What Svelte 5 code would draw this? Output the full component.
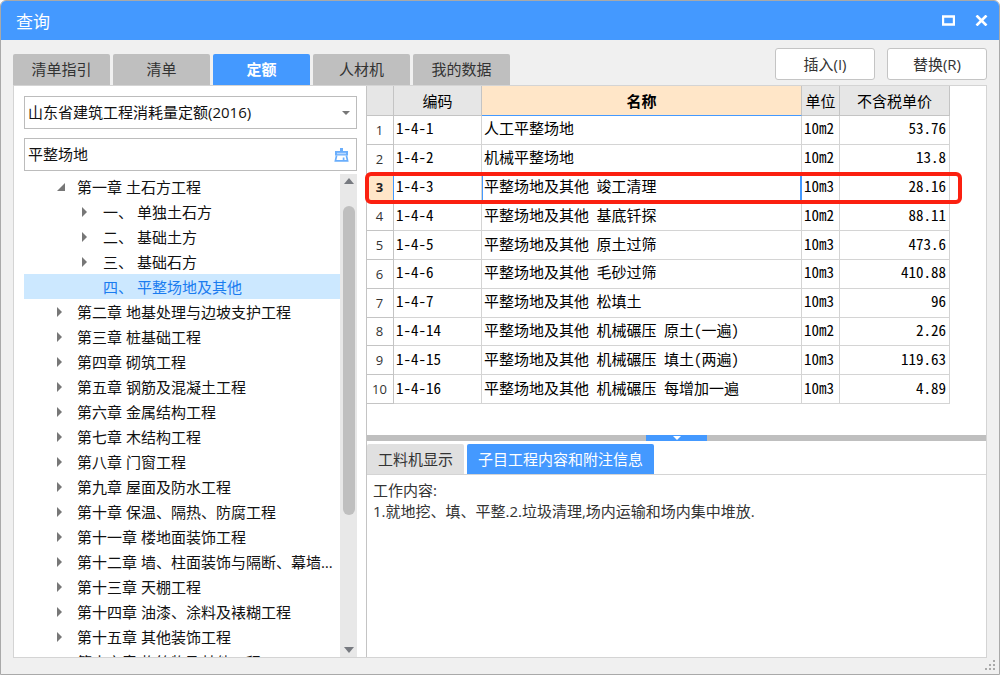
<script lang="ts">
	type TreeNode = { text: string; level: number; state: 'open' | 'closed' | 'leaf' };

	let tabs = ['清单指引', '清单', '定额', '人材机', '我的数据'];
	let activeTab = '定额';

	let detailTabs = ['工料机显示', '子目工程内容和附注信息'];
	let activeDetail = '子目工程内容和附注信息';

	let keyword = '平整场地';

	let activeNode = '四、 平整场地及其他';
	let nodes: TreeNode[] = [
		{ text: '第一章 土石方工程', level: 1, state: 'open' },
		{ text: '一、 单独土石方', level: 2, state: 'closed' },
		{ text: '二、 基础土方', level: 2, state: 'closed' },
		{ text: '三、 基础石方', level: 2, state: 'closed' },
		{ text: '四、 平整场地及其他', level: 2, state: 'leaf' },
		{ text: '第二章 地基处理与边坡支护工程', level: 1, state: 'closed' },
		{ text: '第三章 桩基础工程', level: 1, state: 'closed' },
		{ text: '第四章 砌筑工程', level: 1, state: 'closed' },
		{ text: '第五章 钢筋及混凝土工程', level: 1, state: 'closed' },
		{ text: '第六章 金属结构工程', level: 1, state: 'closed' },
		{ text: '第七章 木结构工程', level: 1, state: 'closed' },
		{ text: '第八章 门窗工程', level: 1, state: 'closed' },
		{ text: '第九章 屋面及防水工程', level: 1, state: 'closed' },
		{ text: '第十章 保温、隔热、防腐工程', level: 1, state: 'closed' },
		{ text: '第十一章 楼地面装饰工程', level: 1, state: 'closed' },
		{ text: '第十二章 墙、柱面装饰与隔断、幕墙工程', level: 1, state: 'closed' },
		{ text: '第十三章 天棚工程', level: 1, state: 'closed' },
		{ text: '第十四章 油漆、涂料及裱糊工程', level: 1, state: 'closed' },
		{ text: '第十五章 其他装饰工程', level: 1, state: 'closed' },
		{ text: '第十六章 构筑物及其他工程', level: 1, state: 'closed' }
	];

	let selected = 2;
	let rows = [
		{ code: '1-4-1', name: '人工平整场地', unit: '10m2', price: '53.76' },
		{ code: '1-4-2', name: '机械平整场地', unit: '10m2', price: '13.8' },
		{ code: '1-4-3', name: '平整场地及其他 竣工清理', unit: '10m3', price: '28.16' },
		{ code: '1-4-4', name: '平整场地及其他 基底钎探', unit: '10m2', price: '88.11' },
		{ code: '1-4-5', name: '平整场地及其他 原土过筛', unit: '10m3', price: '473.6' },
		{ code: '1-4-6', name: '平整场地及其他 毛砂过筛', unit: '10m3', price: '410.88' },
		{ code: '1-4-7', name: '平整场地及其他 松填土', unit: '10m3', price: '96' },
		{ code: '1-4-14', name: '平整场地及其他 机械碾压 原土(一遍)', unit: '10m2', price: '2.26' },
		{ code: '1-4-15', name: '平整场地及其他 机械碾压 填土(两遍)', unit: '10m3', price: '119.63' },
		{ code: '1-4-16', name: '平整场地及其他 机械碾压 每增加一遍', unit: '10m3', price: '4.89' }
	];
</script>

<div class="window">
	<header class="titlebar">
		<h1>查询</h1>
		<button class="win-btn" aria-label="最大化">
			<svg width="13" height="11" viewBox="0 0 13 11">
				<path d="M1 1.5h11v8H1z" fill="none" stroke="#fff" stroke-width="2.4" />
			</svg>
		</button>
		<button class="win-btn" aria-label="关闭">
			<svg width="13" height="11" viewBox="0 0 13 11">
				<path d="M1.5.5l10 10M11.5.5l-10 10" fill="none" stroke="#fff" stroke-width="2.6" />
			</svg>
		</button>
	</header>

	<div class="toolbar">
		<nav class="tabs">
			{#each tabs as tab}
				<button class="tab" class:active={tab === activeTab} on:click={() => (activeTab = tab)}>
					{tab}
				</button>
			{/each}
		</nav>
		<div class="actions">
			<button class="action">插入(I)</button>
			<button class="action">替换(R)</button>
		</div>
	</div>

	<main class="content">
		<aside class="side">
			<div class="field">
				<select aria-label="定额库">
					<option>山东省建筑工程消耗量定额(2016)</option>
				</select>
				<svg class="caret" width="8" height="4" viewBox="0 0 8 4">
					<path d="M0 0h8L4 4z" fill="#777" />
				</svg>
			</div>
			<div class="field">
				<input type="text" aria-label="搜索" bind:value={keyword} />
				<button class="clear" aria-label="清空" on:click={() => (keyword = '')}>
					<svg width="15" height="16" viewBox="0 0 15 16">
						<path d="M6 1h3v3h5v4.5H1V4h5z" fill="#6aaefc" />
						<path d="M3 6.5h9" stroke="#b7d8ff" stroke-width="1.4" />
						<path
							d="M2.6 8.5L1.4 13.8h12.2L12.4 8.5M9.6 10.5v3"
							fill="none"
							stroke="#6aaefc"
							stroke-width="1.7"
						/>
					</svg>
				</button>
			</div>

			<div class="tree-box">
				<ul class="tree">
					{#each nodes as node}
						<li class={'level' + node.level} class:current={node.text === activeNode}>
							<span class="twisty">
								{#if node.state === 'open'}
									<svg width="8" height="8" viewBox="0 0 8 8"><path d="M8 0v8H0z" fill="#777" /></svg>
								{:else if node.state === 'closed'}
									<svg width="8" height="10" viewBox="0 0 8 10"><path d="M0 0l5 5-5 5z" fill="#777" /></svg>
								{/if}
							</span>
							<button class="node" on:click={() => (activeNode = node.text)}>{node.text}</button>
						</li>
					{/each}
				</ul>
				<div class="scrollbar">
					<svg width="10" height="6" viewBox="0 0 10 6"><path d="M0 6h10L5 0z" fill="#777a80" /></svg>
					<div class="track"><div class="thumb"></div></div>
					<svg width="10" height="6" viewBox="0 0 10 6"><path d="M0 0h10L5 6z" fill="#777a80" /></svg>
				</div>
			</div>
		</aside>

		<section class="main">
			<div class="grid-box">
				<table>
					<colgroup>
						<col class="c-num" />
						<col class="c-code" />
						<col />
						<col class="c-unit" />
						<col class="c-price" />
					</colgroup>
					<thead>
						<tr>
							<th></th>
							<th>编码</th>
							<th class="sorted">名称</th>
							<th>单位</th>
							<th>不含税单价</th>
						</tr>
					</thead>
					<tbody>
						{#each rows as row, i}
							<tr class:selected={i === selected} on:click={() => (selected = i)}>
								<td class="num">{i + 1}</td>
								<td>{row.code}</td>
								<td class="name">{row.name}</td>
								<td>{row.unit}</td>
								<td class="price">{row.price}</td>
							</tr>
						{/each}
					</tbody>
				</table>
			</div>

			<div class="splitter">
				<button class="handle" aria-label="收起">
					<svg width="8" height="4" viewBox="0 0 8 4"><path d="M0 0h8L4 4z" fill="#fff" /></svg>
				</button>
			</div>

			<nav class="detail-tabs">
				{#each detailTabs as tab}
					<button
						class="detail-tab"
						class:active={tab === activeDetail}
						on:click={() => (activeDetail = tab)}
					>
						{tab}
					</button>
				{/each}
			</nav>
			<div class="detail">
				<p>工作内容:</p>
				<p>1.就地挖、填、平整.2.垃圾清理,场内运输和场内集中堆放.</p>
			</div>
		</section>
	</main>

	<footer>
		<svg width="11" height="11" viewBox="0 0 11 11" fill="#aaa">
			<path d="M8 0h2v2H8zM4 4h2v2H4zM8 4h2v2H8zM0 8h2v2H0zM4 8h2v2H4zM8 8h2v2H8z" />
		</svg>
	</footer>
</div>

<style>
	:global(body) {
		margin: 0;
		background: #fff;
	}

	* {
		box-sizing: border-box;
	}

	.window {
		display: flex;
		flex-direction: column;
		height: 100vh;
		border: 1px solid #a9a9a9;
		border-radius: 6px 6px 0 0;
		overflow: hidden;
		background: #f0f0f0;
		color: #111;
		font-family: 'Open Sans', 'Noto Sans CJK SC', sans-serif;
		font-size: 15px;
		line-height: 20px;
	}

	button,
	input,
	select {
		margin: 0;
		padding: 0;
		border: none;
		background: none;
		color: inherit;
		font: inherit;
	}

	svg {
		display: block;
	}

	.titlebar {
		display: flex;
		align-items: center;
		gap: 20px;
		height: 39px;
		flex: none;
		padding: 0 11px 0 15px;
		background: #4499ff;
		color: #fff;
	}

	h1 {
		flex: 1;
		margin: 0;
		padding-top: 3px;
		font-size: 17px;
		font-weight: 400;
	}

	.toolbar {
		display: flex;
		justify-content: space-between;
		align-items: flex-end;
		flex: none;
		height: 45px;
		padding: 0 12px;
	}

	.tabs {
		display: flex;
		gap: 3px;
	}

	.tab {
		width: 97px;
		height: 31px;
		padding-bottom: 2px;
		border-radius: 2px 2px 0 0;
		background: #bfbfbf;
		color: #333;
	}

	.tab.active {
		background: #4499ff;
		color: #fff;
		font-weight: 700;
	}

	.actions {
		display: flex;
		gap: 12px;
		padding-bottom: 5px;
	}

	.action {
		width: 100px;
		height: 32px;
		border: 1px solid #c4c4c4;
		border-radius: 3px;
		background: #fff;
		color: #333;
	}

	.content {
		display: flex;
		flex: 1;
		min-height: 0;
		margin: 0 12px;
		border: 1px solid #d4d4d4;
		background: #fff;
	}

	.side {
		display: flex;
		flex-direction: column;
		gap: 9px;
		width: 352px;
		flex: none;
		padding: 10px 9px 0 10px;
	}

	.field {
		position: relative;
		display: flex;
		flex: none;
		height: 33px;
		border: 1px solid #bcbcbc;
	}

	.field select,
	.field input {
		flex: 1;
		min-width: 0;
		padding: 0 3px 2px;
		appearance: none;
		outline: none;
	}

	.caret {
		position: absolute;
		top: 14px;
		right: 6px;
		pointer-events: none;
	}

	.clear {
		padding: 0 7px;
	}

	.tree-box {
		display: flex;
		flex: 1;
		min-height: 0;
		margin-top: -6px;
	}

	.tree {
		flex: 1;
		min-width: 0;
		margin: 0;
		padding: 0;
		overflow-x: hidden;
		overflow-y: auto;
		scrollbar-width: none;
		list-style: none;
	}

	.tree li {
		display: flex;
		align-items: center;
		height: 25px;
		padding-left: 33px;
	}

	.tree li.level2 {
		padding-left: 58px;
	}

	.tree li.current {
		background: #cce8ff;
		color: #1a7cf0;
	}

	.twisty {
		width: 20px;
		flex: none;
	}

	.level2 .twisty {
		width: 21px;
	}

	.node {
		min-width: 0;
		padding-right: 4px;
		overflow: hidden;
		text-align: left;
		text-overflow: ellipsis;
		white-space: nowrap;
	}

	.scrollbar {
		display: flex;
		flex-direction: column;
		align-items: center;
		width: 17px;
		flex: none;
		padding: 4px 0;
		background: #e8e8e8;
	}

	.track {
		flex: 1;
		padding-top: 22px;
	}

	.thumb {
		width: 12px;
		height: 70%;
		border-radius: 6px;
		background: #bfbfbf;
	}

	.main {
		display: flex;
		flex-direction: column;
		flex: 1;
		min-width: 0;
		border-left: 1px solid #c4c4c4;
	}

	.grid-box {
		flex: 1;
		padding-right: 36px;
	}

	table {
		width: 100%;
		height: 318px;
		table-layout: fixed;
		border-collapse: separate;
		border-spacing: 0;
		color: #000;
		font-family: 'Noto Sans Mono CJK SC', 'Liberation Mono', 'Noto Sans CJK SC', monospace;
	}

	.c-num {
		width: 27px;
	}

	.c-code {
		width: 88px;
	}

	.c-unit {
		width: 38px;
	}

	.c-price {
		width: 110px;
	}

	th {
		height: 30px;
		padding: 0;
		border-right: 1px solid #c4c4c4;
		border-bottom: 1px solid #c4c4c4;
		background: #e6e6e6;
		font-weight: 400;
	}

	th.sorted {
		border-bottom-color: #4499ff;
		background: #ffe6c8;
		font-weight: 700;
	}

	td {
		padding: 0 3px 3px 2px;
		border-right: 1px solid #d4d4d4;
		border-bottom: 1px solid #d4d4d4;
		white-space: nowrap;
	}

	td.num {
		padding: 0 1px 0 0;
		border-color: #c4c4c4;
		color: #333;
		font-family: 'Open Sans', sans-serif;
		font-size: 13px;
		text-align: center;
	}

	td.price {
		text-align: right;
	}

	tr.selected {
		position: relative;
	}

	/* red frame, sized by the whole row */
	tr.selected .price::after {
		content: '';
		position: absolute;
		inset: -2px -12px -2px -2px;
		border: 4px solid #fb2010;
		border-radius: 6px;
		pointer-events: none;
	}

	tr.selected .num {
		border-right-color: #4499ff;
		background: #ffe6c8;
		color: #222;
		font-weight: 700;
	}

	tr.selected .name {
		padding-left: 1px;
		border-left: 1px solid #4499ff;
		border-right: 2px solid #4499ff;
	}

	.splitter {
		display: flex;
		justify-content: center;
		flex: none;
		background: #bfbfbf;
	}

	.handle {
		display: flex;
		justify-content: center;
		width: 61px;
		height: 6px;
		padding-top: 1px;
		background: #4499ff;
	}

	.detail-tabs {
		display: flex;
		gap: 3px;
		flex: none;
		padding-top: 3px;
	}

	.detail-tab {
		height: 30px;
		padding: 0 11px;
		border-radius: 2px 2px 0 0;
		background: #e0e0e0;
		color: #333;
	}

	.detail-tab.active {
		background: #4499ff;
		color: #fff;
	}

	.detail {
		height: 183px;
		flex: none;
		padding: 5px 6px;
		border-top: 1px solid #d4d4d4;
		color: #333;
	}

	.detail p {
		margin: 0;
		line-height: 21px;
	}

	footer {
		display: flex;
		justify-content: flex-end;
		flex: none;
		height: 16px;
		padding: 2px 3px 0 0;
	}
</style>
